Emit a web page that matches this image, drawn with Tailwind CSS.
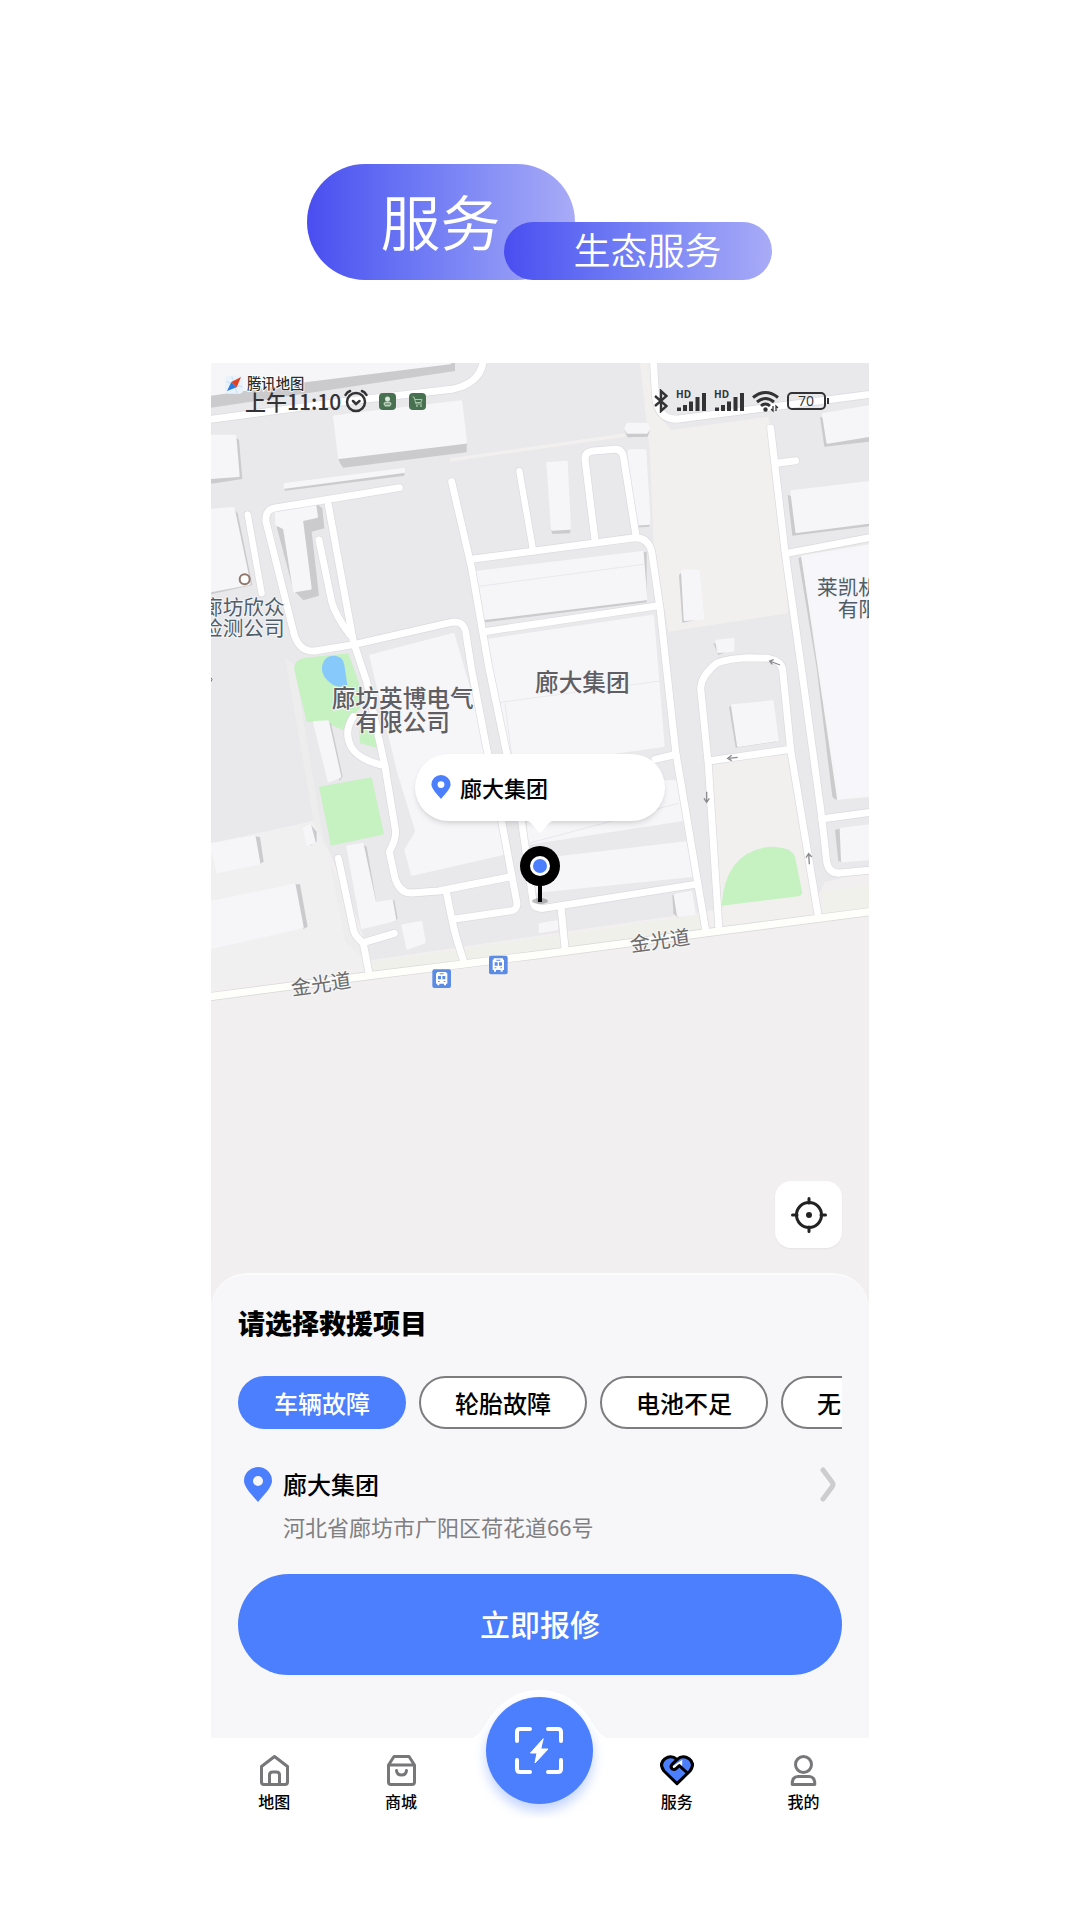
<!DOCTYPE html>
<html lang="zh-CN">
<head>
    <meta charset="UTF-8">
    <meta name="viewport" content="width=device-width, initial-scale=1.0">
    <title>服务 - 生态服务</title>
    <script src="https://cdn.jsdelivr.net/npm/@tailwindcss/browser@4"></script>
</head>
<body class="bg-white text-black font-['Noto_Sans_CJK_SC',sans-serif]">
    <!-- Header -->
    <header class="flex justify-center items-end pt-[164px] pb-[83px] pr-[2px]">
        <h1 class="w-[268px] h-[116px] rounded-full bg-linear-to-r from-[#4a4df0] to-[#a9abf6] flex items-center pl-[74px] pb-1 text-[60px] leading-none font-[350] text-white">服务</h1>
        <p class="relative -ml-[71px] w-[268px] h-[58px] rounded-full bg-linear-to-r from-[#4a4df0] to-[#a9abf6] flex items-center justify-center pl-5 pb-1 text-[37px] leading-none font-[350] text-white">生态服务</p>
    </header>

    <main class="w-full max-w-[658px] mx-auto">
        <!-- Map -->
        <section class="relative">
            <svg class="block w-full h-auto" viewBox="18 24 1974 2838" aria-label="地图">
                <rect x="18" y="24" width="1974" height="2838" fill="#f1efef"/>
                <!-- Blocks -->
                <path fill="#e9e8ea" d="M18 24H1992V1550L1860 1580L1840 1620L1490 1670L500 1815L460 1700L335 1400L18 1465Z"/>
                <path fill="#ededed" d="M240 905L268 930L345 1395L420 1760L500 1830L325 1398Z"/>
                <path fill="#f0f0f0" d="M18 1465L325 1398L370 1500L420 1760L500 1830L18 1900Z"/>
                <path fill="#f1f0ee" d="M1305 24H1340L1350 170L1400 225L1690 185L1705 250L1750 775L1390 830L1345 560L1335 300Z"/>
                <path fill="#f1f0ee" d="M1510 1230L1757 1190L1835 1680L1555 1720Z"/>
                <path fill="#f1f1ec" d="M1850 1610L1992 1590V1665L1860 1680Z"/>
                <path fill="#f0f0eb" d="M500 1820L1480 1680L1490 1730L500 1850Z"/>
                <path stroke="#f1f0ee" stroke-width="10" fill="none" d="M735 315L1260 240"/>
                <!-- Parks and pond -->
                <g fill="#c6f1c1">
                    <path d="M268 945Q265 915 300 908L430 895L462 985L465 1060L430 1095L415 1125L365 1105L305 1100Z"/>
                    <path d="M462 1125L512 1120L520 1180L465 1165Z"/>
                    <path d="M342 1295L500 1267L537 1438L378 1472Z"/>
                    <path d="M1550 1652Q1560 1490 1695 1475Q1760 1475 1770 1505L1792 1615Q1788 1622 1780 1624Z"/>
                </g>
                <path fill="#87c9fa" d="M352 930Q360 900 390 902Q415 905 418 930L427 990Q405 1000 385 990Q345 965 352 930Z"/>
                <!-- Building shadows -->
                <g fill="#cbcacd">
                    <path d="M18 118L750 20V48L18 158Z"/>
                    <path d="M400 305L785 262V292L415 338Q402 325 400 305Z"/>
                    <path d="M90 245L102 255L112 372L18 386V370Z"/>
                    <path d="M237 395L598 348V362L240 407Z"/>
                    <path d="M328 440L352 460L358 520L320 530L342 722L295 736L265 705L215 515Z"/>
                    <path d="M85 460L98 475L142 690L18 718Z"/>
                    <path d="M812 660L1325 590V742L830 803Z"/>
                    <path d="M1037 520L1097 520L1095 535L1042 537Z"/>
                    <path d="M1258 225L1335 225L1328 245L1268 247Z"/>
                    <path d="M1280 500L1338 500L1332 515L1285 518Z"/>
                    <path d="M1422 660L1432 650L1496 790L1432 803Z"/>
                    <path d="M1525 865L1590 880L1540 900Z"/>
                    <path d="M1845 185L1992 240V260L1858 275Z"/>
                    <path d="M1748 420L1992 500V514L1762 542Z"/>
                    <path d="M1780 610L1788 605L1905 1325L1892 1334L1882 1325L1835 940Z"/>
                    <path d="M1572 1055L1590 1050L1715 1160L1592 1178Z"/>
                    <path d="M1890 1425L1910 1420V1520L1900 1518Z"/>
                    <path d="M1402 1622L1410 1615L1420 1690L1405 1675Z"/>
                    <path d="M470 1468L485 1475L514 1642L568 1636L578 1690L570 1702L500 1660Z"/>
                    <path d="M368 1102L378 1105L413 1265L403 1278Z"/>
                    <path d="M318 1410L335 1430V1460L315 1472Z"/>
                    <path d="M150 1444L165 1446L176 1520L165 1526Z"/>
                    <path d="M265 1588L285 1588L308 1715L295 1722Z"/>
                    <path d="M505 895L525 897V912Z"/>
                    <path d="M578 1246L592 1240L595 1252Z"/>
                </g>
                <!-- Building roofs -->
                <g fill="#f6f5f8" stroke="#f6f5f8" stroke-width="8" stroke-linejoin="round">
                    <path d="M18 24H735L300 78L18 118Z"/>
                    <path d="M388 185L768 140L782 262L403 308Z"/>
                    <path d="M18 243H90L100 362L18 368Z"/>
                    <path d="M240 388L596 343V350L240 397Z"/>
                    <path d="M213 455L328 438L335 485L290 495L316 700L268 708L238 520L215 508Z"/>
                    <path d="M18 465L85 460L133 686L18 708Z"/>
                    <path d="M812 652L1312 592L1323 732L830 792Z"/>
                    <path d="M852 855L1343 783L1375 1172L1230 1192L920 1240Z"/>
                    <path d="M497 902L745 838L850 1200L898 1495L622 1558L602 1485L635 1430L580 1250Z"/>
                    <path d="M1028 325L1084 321L1094 520L1042 523Z"/>
                    <path d="M1268 207L1325 207L1332 222L1325 232H1268L1262 222Z"/>
                    <path d="M1272 287H1320L1333 505L1288 508Z"/>
                    <path d="M1432 648H1480L1494 790L1440 794Z"/>
                    <path d="M1535 858L1584 853V886L1540 890Z"/>
                    <path d="M1855 178L1992 155V242L1868 262Z"/>
                    <path d="M1760 410L1992 382V502L1775 530Z"/>
                    <path fill="#f7f6fb" d="M1793 605L1992 572V1322L1900 1330Z"/>
                    <path d="M1582 1052L1702 1040L1717 1155L1600 1172Z"/>
                    <path d="M1908 1422L1992 1412V1512L1912 1518Z"/>
                    <path d="M1410 1620L1458 1612L1468 1675L1420 1682Z"/>
                    <path d="M970 1390L1340 1280L1420 1280L1430 1395L970 1465Z"/>
                    <path d="M970 1518L1450 1462L1462 1562L970 1612Z"/>
                    <path d="M428 1475L472 1468L510 1645L560 1638L570 1695L472 1718Z"/>
                    <path d="M328 1102L368 1100L405 1265L372 1278Z"/>
                    <path d="M298 1420L315 1412L328 1462L308 1468Z"/>
                    <path d="M18 1468L148 1446L162 1525L38 1550Z"/>
                    <path d="M18 1642L268 1590L292 1716L18 1778Z"/>
                    <path d="M593 1712L648 1702L658 1762L608 1780Z"/>
                    <path d="M1005 1708L1055 1700V1722L1005 1730Z"/>
                </g>
                <path stroke="#e9e8ec" stroke-width="3" fill="none" d="M815 695L1315 628M860 1050L900 1040L1365 978M900 1045L925 1240M970 1465L1420 1345"/>
                <!-- Roads: casing first, then surface -->
                <defs>
                    <g id="roads" fill="none" stroke-linecap="round" stroke-linejoin="round">
                        <path d="M0 195L400 142L740 103Q830 85 836 10"/>
                        <path d="M1345 10L1352 130Q1362 197 1420 192L2010 116"/>
                        <path d="M583 398L340 438L215 458Q180 460 183 500L268 840Q285 892 330 888L450 868L735 803Q773 793 782 830L800 945L848 1195L890 1400L920 1560L935 1640Q940 1665 915 1668L745 1693"/>
                        <path d="M370 450L445 860L485 980L540 1235L572 1430Q572 1455 553 1490L570 1570Q585 1615 620 1614L700 1608L918 1565"/>
                        <path d="M342 555L380 740Q390 780 435 840"/>
                        <path d="M740 380L800 640L850 930L905 1195L950 1400L985 1645Q990 1662 1015 1660L1470 1588"/>
                        <path d="M805 612L1290 548Q1330 548 1340 590L1365 760L1385 945L1412 1190L1502 1725"/>
                        <path d="M1170 555L1140 312Q1138 292 1165 288L1230 283Q1252 282 1256 310L1292 535"/>
                        <path d="M838 830L1360 752M1350 1213L1405 1200"/>
                        <path d="M1697 220L1740 590L1790 945L1850 1385L1865 1520Q1872 1558 1905 1554L2010 1544"/>
                        <path d="M1715 325L1772 317M1745 595L2010 545M1850 1392L2010 1370"/>
                        <path d="M1542 1725L1510 1230L1487 1000Q1490 960 1535 925Q1560 912 1630 908L1690 910Q1730 918 1733 945L1757 1185L1840 1685M1510 1218L1757 1183"/>
                        <path d="M725 1615L742 1700Q750 1740 775 1815M1068 1655L1080 1780"/>
                        <path d="M400 1510L447 1730Q452 1745 475 1765L492 1855M475 1763L568 1735"/>
                        <path d="M445 1085Q415 1130 438 1175Q460 1215 540 1232"/>
                    </g>
                </defs>
                <use href="#roads" stroke="#dbdade" stroke-width="25"/>
                <path d="M128 478L170 715M943 348L985 590" stroke="#dbdade" stroke-width="23" stroke-linecap="round"/>
                <path d="M0 1927L500 1861L1010 1798L1530 1730L2010 1668" fill="none" stroke="#d9d8d8" stroke-width="26"/>
                <use href="#roads" stroke="#ffffff" stroke-width="21"/>
                <path d="M128 478L170 715M943 348L985 590" stroke="#ffffff" stroke-width="19" stroke-linecap="round"/>
                <path d="M0 1927L500 1861L1010 1798L1530 1730L2010 1668" fill="none" stroke="#fefefb" stroke-width="22"/>
                <!-- One-way arrows -->
                <g fill="none" stroke="#8a8a8e" stroke-width="4">
                    <path d="M1725 930L1694 918M1706 914L1694 918L1702 928"/>
                    <path d="M1598 1207L1568 1210M1580 1201L1568 1210L1580 1217"/>
                    <path d="M1505 1310V1342M1497 1330L1505 1342L1513 1330"/>
                    <path d="M1813 1528L1811 1496M1803 1508L1811 1496L1820 1506"/>
                </g>
                <circle cx="119" cy="673" r="15" fill="#fff" stroke="#8f776b" stroke-width="6"/>
                <!-- Bus stops -->
                <defs>
                    <g id="bus">
                        <rect width="56" height="56" rx="6" fill="#5c8be6"/>
                        <path d="M14 8H42V12H45V43H41V48H35V43H21V48H15V43H11V12H14Z" fill="#fff"/>
                        <path d="M22 12H34V15H22ZM17 20H26V30H17ZM30 20H39V30H30ZM17 35H22V38H17ZM34 35H39V38H34Z" fill="#5c8be6"/>
                    </g>
                </defs>
                <use href="#bus" x="682" y="1843"/>
                <use href="#bus" x="852" y="1802"/>
                <!-- Place names -->
                <g fill="#5f5e63" stroke="#f7f7f9" stroke-width="6" paint-order="stroke" font-size="71" font-weight="500" text-anchor="middle">
                    <text x="593" y="1055">廊坊英博电气</text>
                    <text x="593" y="1129">有限公司</text>
                    <text x="1132" y="1008">廊大集团</text>
                </g>
                <g fill="#4f5d68" stroke="#f4f4f7" stroke-width="6" paint-order="stroke" font-size="62">
                    <text x="239" y="779" text-anchor="end">廊坊欣众</text>
                    <text x="239" y="842" text-anchor="end">检测公司</text>
                    <text x="1836" y="721">莱凯机</text>
                    <text x="1898" y="785">有限</text>
                </g>
                <g fill="#6c6b6e" stroke="#f7f7f4" stroke-width="6" paint-order="stroke" font-size="60" text-anchor="middle">
                    <text x="348" y="1909" transform="rotate(-8 348 1886)">金光道</text>
                    <text x="1365" y="1779" transform="rotate(-8 1365 1756)">金光道</text>
                </g>
                <path d="M18 968Q24 972 18 980" stroke="#777" stroke-width="3" fill="none"/>
                <!-- Map provider logo -->
                <rect x="60" y="62" width="54" height="54" rx="10" fill="#eaf3fb"/>
                <path d="M64 80L112 96M80 64L96 114" stroke="#cfe3f4" stroke-width="4"/>
                <path d="M108 66L95 97L79 81Z" fill="#e2401f"/>
                <path d="M66 108L79 81L95 97Z" fill="#2a7de0"/>
                <text x="126" y="103" font-size="43" font-weight="500" fill="#2d2d30" stroke="#fff" stroke-width="5" paint-order="stroke">腾讯地图</text>
            </svg>

            <!-- Status bar -->
            <div class="absolute top-[26px] inset-x-0 h-6 flex items-center justify-between pl-[34px] pr-10 text-[#333336]">
                <div class="flex items-center">
                    <span class="text-[21px] leading-6 font-medium">上午11:10</span>
                    <svg class="w-6 h-6 ml-[3px]" viewBox="0 0 24 24" fill="none" stroke="currentColor" stroke-width="2.5" stroke-linecap="round">
                        <circle cx="12" cy="13" r="9"/>
                        <path d="M9 12L12 15L15.500 12M1.500 6Q3 3 6 2M22.500 6Q21 3 18 2"/>
                    </svg>
                    <svg class="w-[17px] h-[17px] ml-[11px]" viewBox="0 0 17 17">
                        <rect width="17" height="17" rx="4" fill="#477150"/>
                        <circle cx="8.500" cy="6" r="2.500" fill="#dbe8dc"/>
                        <path d="M4.500 11Q4.500 8.500 8.500 8.500T12.500 11L11 13.500H6Z" fill="#b9d3bc"/>
                        <path d="M6 11H11" stroke="#477150"/>
                    </svg>
                    <svg class="w-[17px] h-[17px] ml-[13px]" viewBox="0 0 17 17" fill="none" stroke="#a9c9ac">
                        <rect width="17" height="17" rx="4" fill="#477150" stroke="none"/>
                        <path d="M3.500 4H5L7 11H13M6 6.500H13L12 9.500H7"/>
                        <circle cx="8" cy="13" r=".6"/><circle cx="12" cy="13" r=".6"/>
                    </svg>
                </div>
                <div class="flex items-center gap-2">
                    <svg class="w-[14px] h-6" viewBox="0 0 14 24" fill="none" stroke="currentColor" stroke-width="2.4"><path d="M1 7L12.500 17L7 22V2L12.500 7L1 17"/></svg>
                    <svg class="w-[30px] h-6" viewBox="0 0 30 24" fill="currentColor">
                        <text x="0" y="9" font-size="10" font-weight="700" font-family="Open Sans">HD</text>
                        <path d="M1 18.500H5V22H1ZM7 16H11V22H7ZM13 12.500H17V22H13ZM19.500 8H23.500V22H19.500ZM26 4H30V22H26Z"/>
                    </svg>
                    <svg class="w-[30px] h-6" viewBox="0 0 30 24" fill="currentColor">
                        <text x="0" y="9" font-size="10" font-weight="700" font-family="Open Sans">HD</text>
                        <path d="M1 18.500H5V22H1ZM7 16H11V22H7ZM13 12.500H17V22H13ZM19.500 8H23.500V22H19.500ZM26 4H30V22H26Z"/>
                    </svg>
                    <svg class="w-[27px] h-6" viewBox="0 0 27 24" fill="none" stroke="currentColor" stroke-width="3">
                        <path d="M1 8.500Q13.500 -1.500 26 8.500M5 13Q13.500 6 22 13M9 17Q13.500 13 18 17"/>
                        <circle cx="13.500" cy="20.500" r="1.200" fill="currentColor" stroke-width="2"/>
                        <path d="M21 17V22L19 20M24 22V17L26 19" stroke-width="1.300"/>
                    </svg>
                    <svg class="w-[42px] h-6" viewBox="0 0 42 24" fill="none" stroke="currentColor" stroke-width="2">
                        <rect x="1" y="4" width="37" height="16" rx="4"/>
                        <path d="M41 9V15" stroke-width="2"/>
                        <text x="19" y="17" font-size="14" text-anchor="middle" fill="currentColor" stroke="none" font-family="Open Sans">70</text>
                    </svg>
                </div>
            </div>

            <!-- Location bubble -->
            <div class="absolute top-[391px] left-1/2 -translate-x-1/2 w-[250px] h-[67px] rounded-full bg-white shadow-md flex items-center pl-4 pb-[2px] gap-[9px] text-[22px] leading-7 font-medium">
                <svg class="w-5 h-6" viewBox="0 0 28 35"><path fill="#4c7ffe" fill-rule="evenodd" d="M14 0A14 14 0 0 1 28 14C28 20 20 28 14 35C8 28 0 20 0 14A14 14 0 0 1 14 0ZM14 9A5 5 0 1 0 14 19A5 5 0 1 0 14 9Z"/></svg>
                廊大集团
                <svg class="absolute top-full left-1/2 -translate-x-1/2 w-6 h-3" viewBox="0 0 24 12"><path fill="#fff" d="M0 0H24Q20 2 16 8Q12 15 8 8Q4 2 0 0Z"/></svg>
            </div>
            <!-- Center marker -->
            <svg class="absolute top-[483px] left-1/2 -translate-x-1/2 w-10 h-[58px]" viewBox="0 0 40 58">
                <ellipse cx="20" cy="55" rx="8" ry="3" fill="#000" opacity=".25"/>
                <path d="M20 38V56" stroke="#000" stroke-width="4"/>
                <circle cx="20" cy="20" r="20"/>
                <circle cx="20" cy="20" r="10" fill="#fff"/>
                <circle cx="20" cy="20" r="7" fill="#4c7ffe"/>
            </svg>

            <!-- Locate button -->
            <button class="absolute bottom-[61px] right-[27px] w-[67px] h-[67px] rounded-2xl bg-white shadow-xs flex items-center justify-center" aria-label="定位">
                <svg class="w-9 h-9" viewBox="0 0 36 36" fill="none" stroke="#222" stroke-width="3" stroke-linecap="round">
                    <circle cx="18" cy="18" r="12.500"/>
                    <circle cx="18" cy="18" r="3" fill="#222" stroke="none"/>
                    <path d="M18 1.500V6M18 30V34.500M1.500 18H6M30 18H34.500"/>
                </svg>
            </button>
        </section>

        <!-- Rescue sheet -->
        <section class="relative -mt-9 rounded-t-[36px] border-t-2 border-[#fbfbfc] bg-[#f7f6f8] px-[27px] pt-[30px] pb-[63px]">
            <h2 class="text-[27px] leading-9 font-black">请选择救援项目</h2>
            <div class="mt-[35px] flex gap-[13px] overflow-hidden text-2xl font-medium">
                <button class="shrink-0 w-[168px] h-[53px] rounded-full bg-[#4c7ffe] text-white">车辆故障</button>
                <button class="shrink-0 w-[168px] h-[53px] rounded-full bg-white border-2 border-[#7d7d80]">轮胎故障</button>
                <button class="shrink-0 w-[168px] h-[53px] rounded-full bg-white border-2 border-[#7d7d80]">电池不足</button>
                <button class="shrink-0 w-[168px] h-[53px] rounded-full bg-white border-2 border-[#7d7d80] text-left pl-[34px] whitespace-nowrap">无</button>
            </div>
            <button class="mt-[38px] w-full flex items-start text-left">
                <svg class="w-7 h-[35px] ml-[6px]" viewBox="0 0 28 35"><path fill="#4c7ffe" fill-rule="evenodd" d="M14 0A14 14 0 0 1 28 14C28 20 20 28 14 35C8 28 0 20 0 14A14 14 0 0 1 14 0ZM14 9A5 5 0 1 0 14 19A5 5 0 1 0 14 9Z"/></svg>
                <span class="flex-1 flex flex-col gap-[14px] pl-[11px] pt-[3px] pb-[2px]">
                    <span class="text-2xl leading-7 font-medium">廊大集团</span>
                    <span class="text-[22px] leading-7 text-[#7f7f82]">河北省廊坊市广阳区荷花道66号</span>
                </span>
                <svg class="w-4 h-[35px] mr-[6px]" viewBox="0 0 16 35" fill="none" stroke="#cdcdd0" stroke-width="5" stroke-linecap="round" stroke-linejoin="round"><path d="M3 3L12 15Q14 17 12 20L3 32"/></svg>
            </button>
            <button class="mt-8 w-full h-[101px] pb-1 rounded-full bg-[#4c7ffe] text-white text-3xl font-medium">立即报修</button>
        </section>

        <!-- Bottom navigation -->
        <nav class="h-20 bg-white flex pt-[17px] pr-[2px] text-base leading-5 font-medium">
            <a href="#map" class="flex-1 flex flex-col items-center gap-[5px]">
                <svg class="w-[31px] h-[31px]" viewBox="0 0 31 31" fill="none" stroke="#77777a" stroke-width="3" stroke-linejoin="round">
                    <path d="M2.500 11.500L15.500 1.500L28.500 11.500V27Q28.500 29.500 26 29.500H5Q2.500 29.500 2.500 27Z"/>
                    <path d="M10.500 29V20Q10.500 17 13.500 17H17.500Q20.500 17 20.500 20V29"/>
                </svg>
                地图
            </a>
            <a href="#mall" class="flex-1 flex flex-col items-center gap-[5px]">
                <svg class="w-[31px] h-[31px]" viewBox="0 0 31 31" fill="none" stroke="#77777a" stroke-width="3" stroke-linejoin="round" stroke-linecap="round">
                    <path d="M2.500 10L8 1.500H23L28.500 10V27Q28.500 29.500 26 29.500H5Q2.500 29.500 2.500 27ZM2.500 10H28.500"/>
                    <path d="M10.500 15.500Q11 20 15.500 20T20.500 15.500"/>
                </svg>
                商城
            </a>
            <div class="relative w-[149px]">
                <svg class="absolute -top-[65px] left-0 w-[149px] h-[49px]" viewBox="0 0 148 49"><path fill="#fff" d="M0 49C12 49 16 40 20 34C34 10 54 0 74 0C94 0 114 10 128 34C132 40 136 49 148 49Z"/></svg>
                <button class="absolute -top-[58px] left-[21px] w-[107px] h-[107px] rounded-full bg-[#4c7ffe] shadow-[0_7px_12px_#4c7ffe55] flex items-center justify-center" aria-label="扫码充电">
                    <svg class="w-12 h-12" viewBox="0 0 48 48" fill="none" stroke="#fff" stroke-width="4" stroke-linecap="round" stroke-linejoin="round">
                        <path d="M2 14V5Q2 2 5 2H15M33 2H43Q46 2 46 5V14M2 33V42Q2 45 5 45H15M33 45H43Q46 45 46 42V33"/>
                        <path fill="#fff" stroke-width="1" d="M28 12L15.500 26H22L20 36L33 22H26Z"/>
                    </svg>
                </button>
            </div>
            <a href="#service" class="flex-1 flex flex-col items-center gap-[5px]">
                <svg class="w-[34px] h-[31px]" viewBox="0 0 102 93" stroke="#000" stroke-width="9" stroke-linejoin="round" stroke-linecap="round">
                    <path fill="#4c7ffe" d="M51 86L12 48Q-4 26 14 12Q34 -2 51 14Q68 -2 88 12Q106 26 90 48Z"/>
                    <path fill="#fff" stroke="none" d="M67 14L34 36L42 44L58 34L66 38Z"/>
                    <path fill="none" d="M51 14L36 28Q30 36 37 42Q43 46 49 40L58 32L82 54"/>
                </svg>
                服务
            </a>
            <a href="#mine" class="flex-1 flex flex-col items-center gap-[5px]">
                <svg class="w-[31px] h-[31px]" viewBox="0 0 31 31" fill="none" stroke="#77777a" stroke-width="3" stroke-linejoin="round">
                    <circle cx="15.500" cy="9.500" r="8"/>
                    <path d="M4.200 29.500Q4 21.500 10 21.500H21Q27 21.500 26.800 29.500Z"/>
                </svg>
                我的
            </a>
        </nav>
    </main>
</body>
</html>
